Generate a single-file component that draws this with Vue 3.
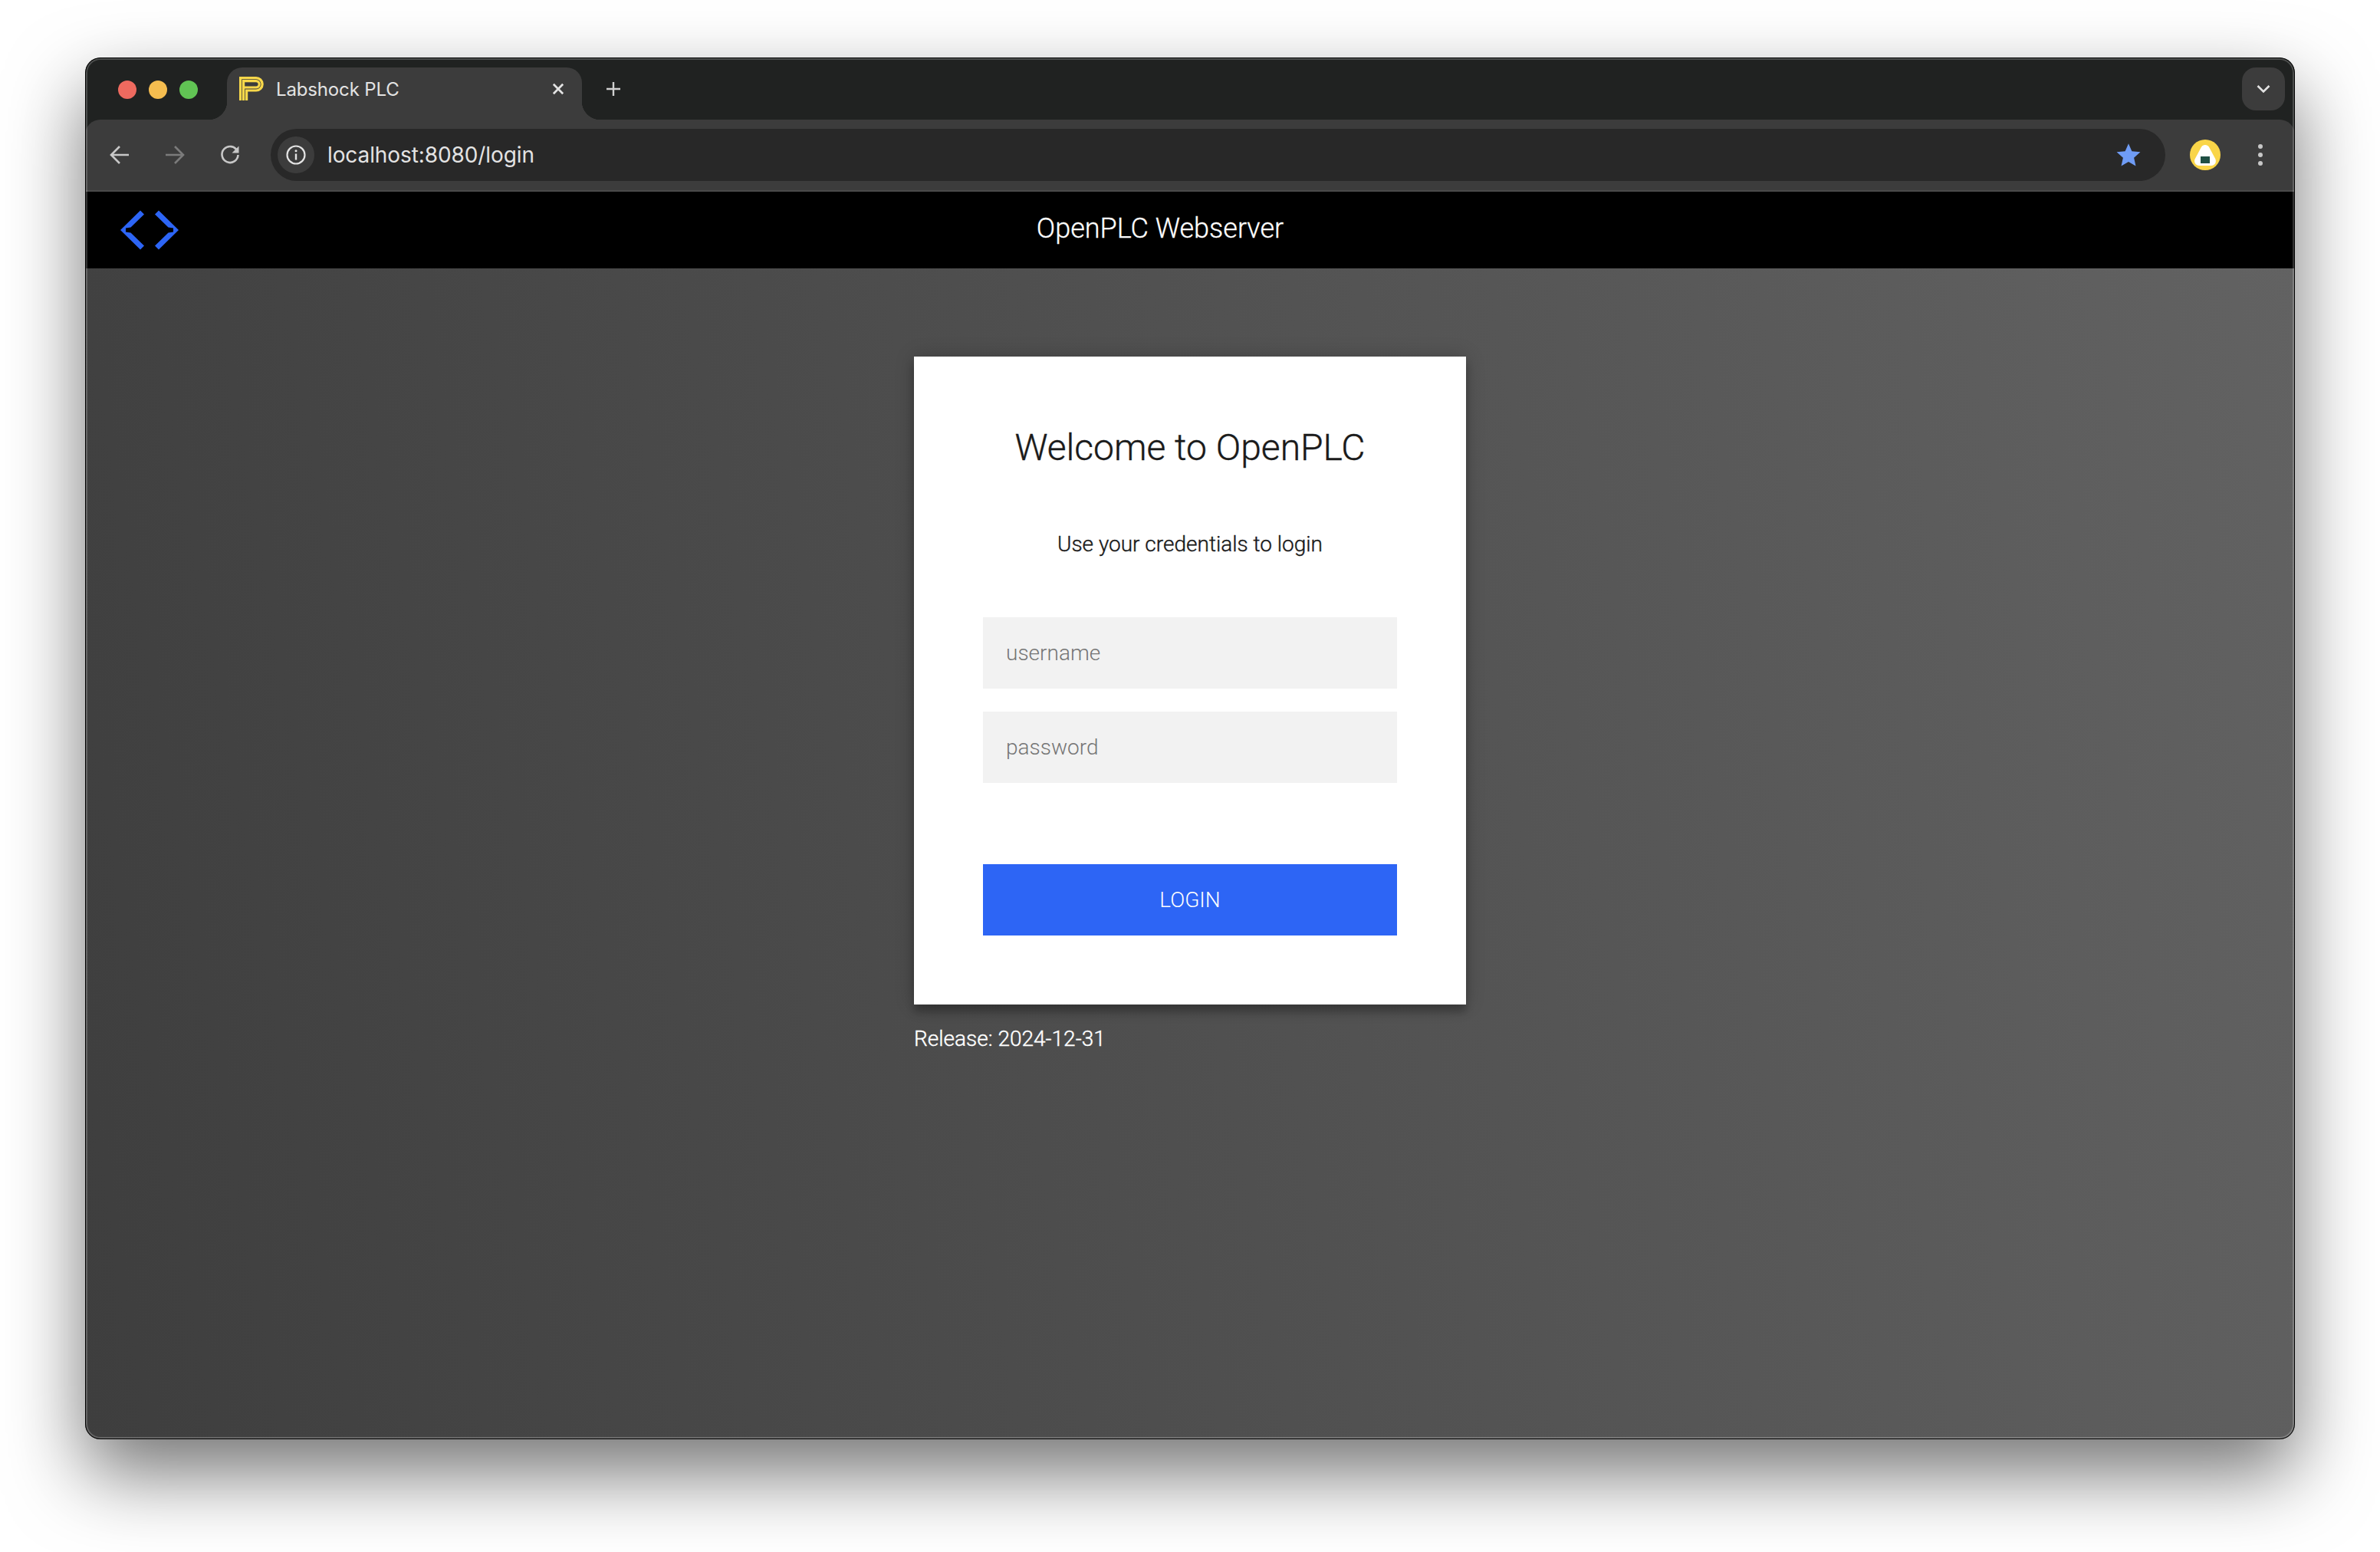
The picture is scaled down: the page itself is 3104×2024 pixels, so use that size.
<template>
  <div class="stage">
    <div class="window">
      <div class="tabstrip">
        <div class="lights">
          <span v-for="c in lights" :key="c" class="light" :style="{ background: c }"></span>
        </div>
        <div class="tab">
          <svg class="favicon" viewBox="0 0 32 32">
            <g fill="none" stroke="#f8d84a" stroke-width="3.2">
              <path d="M1.600 31V1.600H22a8.200 8.200 0 0 1 0 16.400H9.600V31"/>
              <path d="M5.600 31V5.600H22a4.200 4.200 0 0 1 0 8.400H5.600"/>
            </g>
          </svg>
          <span class="tab-title">Labshock PLC</span>
          <svg class="tab-close" viewBox="0 0 16 16">
            <path d="M2.500 2.500l11 11M13.500 2.500l-11 11" stroke="#e3e3e3" stroke-width="2.400" fill="none"/>
          </svg>
        </div>
        <svg class="new-tab" viewBox="0 0 20 20">
          <path d="M10 1v18M1 10h18" stroke="#d0d0d0" stroke-width="2.400" fill="none"/>
        </svg>
        <div class="tab-menu">
          <svg viewBox="0 0 18 12" width="18" height="12">
            <path d="M1.500 2l7.500 7.500L16.500 2" stroke="#e3e3e3" stroke-width="2.600" fill="none"/>
          </svg>
        </div>
      </div>

      <div class="toolbar">
        <svg class="nav" viewBox="0 0 36 36">
          <path d="M30 18H8M18 7L7 18l11 11" stroke="#c7c7c7" stroke-width="2.600" fill="none"/>
        </svg>
        <svg class="nav" viewBox="0 0 36 36">
          <path d="M6 18h22M18 7l11 11-11 11" stroke="#7b7b7b" stroke-width="2.600" fill="none"/>
        </svg>
        <svg class="nav" viewBox="0 0 36 36">
          <path d="M27.500 13A10.500 10.500 0 1 0 28.500 18" stroke="#c7c7c7" stroke-width="2.600" fill="none"/>
          <path d="M29.500 6.500v9h-9z" fill="#c7c7c7"/>
        </svg>
        <div class="omnibox">
          <div class="site-info">
            <svg viewBox="0 0 26 26" width="26" height="26">
              <circle cx="13" cy="13" r="11.500" stroke="#e3e3e3" stroke-width="2.200" fill="none"/>
              <path d="M13 11.500v8" stroke="#e3e3e3" stroke-width="2.400"/>
              <circle cx="13" cy="7.800" r="1.500" fill="#e3e3e3"/>
            </svg>
          </div>
          <span class="url">localhost:8080/login</span>
          <svg class="star" viewBox="0 0 24 24">
            <polygon points="12,1.500 15.100,8.600 22.900,9.400 17,14.600 18.700,22.300 12,18.300 5.300,22.300 7,14.600 1.100,9.400 8.900,8.600" fill="#6f9cf5"/>
          </svg>
        </div>
        <svg class="avatar" viewBox="0 0 40 40">
          <circle cx="20" cy="20" r="20" fill="#f9d548"/>
          <polygon points="20,13 28,28 12,28" fill="#fff" stroke="#fff" stroke-width="12" stroke-linejoin="round"/>
          <rect x="14" y="22" width="12" height="9" fill="#1f4f44"/>
        </svg>
        <svg class="kebab" viewBox="0 0 24 32">
          <circle cx="12" cy="5" r="3" fill="#c7c7c7"/>
          <circle cx="12" cy="16" r="3" fill="#c7c7c7"/>
          <circle cx="12" cy="27" r="3" fill="#c7c7c7"/>
        </svg>
      </div>

      <header class="site-header">
        <svg class="logo" viewBox="0 0 90 64">
          <polygon points="33,6.500 38,11.500 20.500,28.500 14,29.500 14,34.500 20.500,35.500 38,52.500 33,57.500 7,32" fill="#2d65f5"/>
          <polygon points="52,11.500 57,6.500 83,32 57,57.500 52,52.500 69.500,35.500 76,34.500 76,29.500 69.500,28.500" fill="#2d65f5"/>
        </svg>
        <div class="site-title">OpenPLC Webserver</div>
      </header>

      <main class="page">
        <form class="card" @submit.prevent>
          <h1>Welcome to OpenPLC</h1>
          <p class="hint">Use your credentials to login</p>
          <input class="field" type="text" placeholder="username">
          <input class="field" type="password" placeholder="password">
          <button class="login" type="submit">LOGIN</button>
        </form>
        <div class="release">Release: 2024-12-31</div>
      </main>
    </div>
  </div>
</template>

<script setup>
const lights = ['#ee6a5f', '#f5bd4f', '#61c454']
</script>

<style>
html, body {
  margin: 0;
  background: #fff;
}
</style>

<style scoped>
.stage {
  width: 3104px;
  height: 2024px;
  box-sizing: border-box;
  padding: 75px 111px 147px;
  overflow: hidden;
}
.window {
  position: relative;
  height: 100%;
  display: flex;
  flex-direction: column;
  border-radius: 20px;
  overflow: hidden;
  background: #202221;
  box-shadow: 0 44px 100px rgba(0, 0, 0, 0.55);
}
.window::after {
  content: "";
  position: absolute;
  inset: 0;
  border-radius: 20px;
  border: 1px solid #000;
  box-shadow: inset 0 0 0 2px rgba(255, 255, 255, 0.2);
  pointer-events: none;
}

.tabstrip {
  height: 81px;
  flex: none;
  box-sizing: border-box;
  padding: 13px 13px 0 43px;
  display: flex;
  align-items: flex-start;
}
.lights {
  height: 58px;
  display: flex;
  align-items: center;
  gap: 16px;
}
.light {
  width: 24px;
  height: 24px;
  border-radius: 50%;
}
.tab {
  position: relative;
  margin-left: 38px;
  width: 463px;
  height: 68px;
  box-sizing: border-box;
  padding: 0 22px 12px 16px;
  display: flex;
  align-items: center;
  background: #3c3c3c;
  border-radius: 20px 20px 0 0;
}
.tab::before,
.tab::after {
  content: "";
  position: absolute;
  bottom: 0;
  width: 24px;
  height: 24px;
}
.tab::before {
  left: -24px;
  background: radial-gradient(circle at 0 0, transparent 24px, #3c3c3c 24.500px);
}
.tab::after {
  right: -24px;
  background: radial-gradient(circle at 100% 0, transparent 24px, #3c3c3c 24.500px);
}
.favicon {
  width: 32px;
  height: 32px;
  flex: none;
}
.tab-title {
  margin-left: 16px;
  flex: 1;
  font: 24px "Inter", sans-serif;
  letter-spacing: -0.15px;
  color: #e3e3e3;
}
.tab-close {
  width: 18px;
  height: 18px;
  flex: none;
}
.new-tab {
  width: 20px;
  height: 20px;
  margin: 18px 0 0 31px;
  flex: none;
}
.tab-menu {
  margin-left: auto;
  width: 56px;
  height: 56px;
  border-radius: 18px;
  background: #3c3c3c;
  display: flex;
  align-items: center;
  justify-content: center;
}

.toolbar {
  height: 94px;
  flex: none;
  box-sizing: border-box;
  padding-left: 27px;
  display: flex;
  align-items: center;
  gap: 36px;
  background: #3c3c3c;
  border-bottom: 2px solid #4a4a4a;
  border-radius: 20px 20px 0 0;
}
.nav {
  width: 36px;
  height: 36px;
  flex: none;
}
.omnibox {
  margin-left: -1px;
  width: 2471px;
  height: 68px;
  flex: none;
  box-sizing: border-box;
  padding: 0 31px 0 9px;
  display: flex;
  align-items: center;
  background: #282828;
  border-radius: 34px;
}
.site-info {
  width: 48px;
  height: 48px;
  flex: none;
  border-radius: 50%;
  background: #3c3c3c;
  display: flex;
  align-items: center;
  justify-content: center;
}
.url {
  margin-left: 17px;
  flex: 1;
  font: 28px "Inter", sans-serif;
  letter-spacing: -0.1px;
  color: #e3e3e3;
}
.star {
  width: 34px;
  height: 34px;
  flex: none;
}
.avatar {
  margin-left: -4px;
  width: 40px;
  height: 40px;
  flex: none;
}
.kebab {
  margin-left: 4px;
  width: 24px;
  height: 32px;
  flex: none;
}

.site-header {
  height: 100px;
  flex: none;
  box-sizing: border-box;
  display: flex;
  align-items: center;
  padding: 0 207px 4px 39px;
  background: #000;
}
.logo {
  width: 90px;
  height: 64px;
  flex: none;
  margin-top: 4px;
}
.site-title {
  flex: 1;
  text-align: center;
  font: 300 36px "Roboto", sans-serif;
  -webkit-text-stroke: 0.3px currentColor;
  color: #fff;
}

.page {
  flex: 1;
  box-sizing: border-box;
  padding-top: 115px;
  display: flex;
  flex-direction: column;
  align-items: center;
  background: linear-gradient(80deg, #3e3e3e, #626262);
  font-family: "Roboto", sans-serif;
}
.card {
  width: 720px;
  box-sizing: border-box;
  padding: 90px;
  display: flex;
  flex-direction: column;
  background: #fff;
  box-shadow: 0 0 24px 0 rgba(0, 0, 0, 0.2), 0 10px 10px 0 rgba(0, 0, 0, 0.24);
}
h1 {
  margin: 0 0 78px;
  text-align: center;
  font-size: 48px;
  line-height: 58px;
  font-weight: 300;
  -webkit-text-stroke: 0.4px currentColor;
  color: #1a1a1a;
}
.hint {
  margin: 0 0 77px;
  text-align: center;
  font-size: 28px;
  line-height: 37px;
  font-weight: 300;
  -webkit-text-stroke: 0.4px currentColor;
  color: #1a1a1a;
}
.field {
  height: 93px;
  margin-bottom: 30px;
  box-sizing: border-box;
  padding: 0 30px;
  border: 0;
  outline: 0;
  background: #f2f2f2;
  font: 300 28px "Roboto", sans-serif;
}
.field::placeholder {
  color: #757575;
  opacity: 1;
}
.login {
  margin-top: 76px;
  height: 93px;
  border: 0;
  background: #2d65f5;
  color: #fff;
  font: 300 28px "Roboto", sans-serif;
}
.release {
  width: 720px;
  margin-top: 26px;
  font-size: 28px;
  line-height: 38px;
  font-weight: 300;
  -webkit-text-stroke: 0.4px currentColor;
  color: #fff;
}
</style>
